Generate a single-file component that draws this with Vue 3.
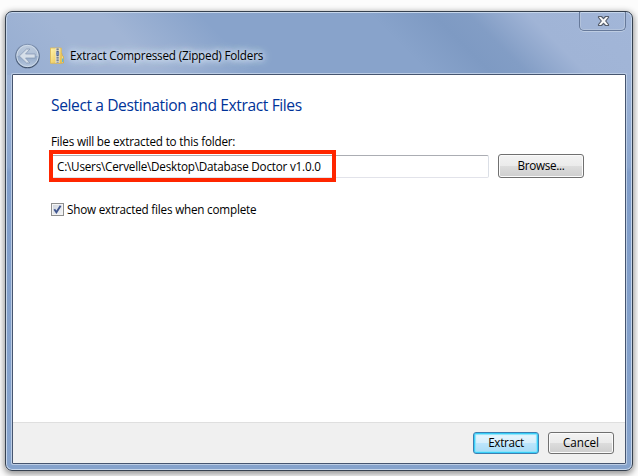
<script setup>
import { ref } from 'vue'

const folder = ref('C:\\Users\\Cervelle\\Desktop\\Database Doctor v1.0.0')
const showFiles = ref(true)
</script>

<template>
  <main class="desktop">
    <section class="window">
      <button class="close" aria-label="Close">
        <svg width="13" height="12" viewBox="0 0 13 12">
          <path d="M1.5 1.5h3l2 2.2 2-2.2h3v1L8.7 6l2.8 3.5v1h-3l-2-2.2-2 2.2h-3v-1L4.3 6 1.5 2.5z" fill="#fafafa" stroke="#555d6b" stroke-width="1.2" stroke-linejoin="round" />
        </svg>
      </button>
      <header class="titlebar">
        <svg class="back" width="25" height="26" viewBox="0 0 26 26">
          <defs>
            <linearGradient id="disc" x1="0" y1="0" x2="0" y2="1">
              <stop offset="0" stop-color="#bdcbdd" />
              <stop offset=".48" stop-color="#afc0d7" />
              <stop offset=".52" stop-color="#93a9c7" />
              <stop offset="1" stop-color="#b9cae1" />
            </linearGradient>
            <linearGradient id="rim" x1="0" y1="0" x2="0" y2="1">
              <stop offset="0" stop-color="#8296b5" />
              <stop offset="1" stop-color="#435570" />
            </linearGradient>
          </defs>
          <circle cx="13" cy="13" r="12.2" fill="url(#disc)" stroke="url(#rim)" stroke-width="1.3" />
          <circle cx="13" cy="13" r="11.1" fill="none" stroke="#d3deeb" stroke-width=".9" />
          <path d="M4.5 13l7.4-7.2h3.6L11 10.9h10v4.2H11l4.5 5.1h-3.6z" fill="#d6dfe9" stroke="#8598b4" stroke-width=".8" stroke-linejoin="round" />
        </svg>
        <svg class="zip" width="15" height="17" viewBox="0 0 15 17">
          <defs>
            <linearGradient id="folder" x1="0" y1="0" x2="1" y2="1">
              <stop offset="0" stop-color="#fff4ad" />
              <stop offset="1" stop-color="#e8bd45" />
            </linearGradient>
          </defs>
          <path d="M9 6l3 .5v2l1.5 1V16H9z" fill="#f3dc86" stroke="#d1a239" stroke-width=".7" />
          <path d="M.5 1h10.8v15.3H.5z" fill="url(#folder)" stroke="#dfb94f" stroke-width=".8" />
          <path d="M5.5 1h4v15h-4z" fill="#e8e5d5" />
          <path d="M7.6 1.5v14" stroke="#52617e" stroke-width="2.3" stroke-dasharray="1.2 1" />
          <path d="M6.2 5h2.9v3H6.2z" fill="#6e83b2" />
          <path d="M12.6 11.5V15" stroke="#52b9df" stroke-width="1.2" />
        </svg>
        <span class="caption">Extract Compressed (Zipped) Folders</span>
      </header>
      <div class="client">
        <div class="body">
          <h1>Select a Destination and Extract Files</h1>
          <label class="label" for="folder">Files will be extracted to this folder:</label>
          <div class="row">
            <div class="field">
              <input id="folder" v-model="folder" type="text" spellcheck="false" />
              <span class="highlight"></span>
            </div>
            <button class="btn browse">Browse...</button>
          </div>
          <label class="option">
            <input v-model="showFiles" type="checkbox" />
            <span class="box">
              <svg v-if="showFiles" width="9" height="9" viewBox="0 0 9 9">
                <path d="M1.3 4.2l2.1 3L7.6 .8" fill="none" stroke="#40568f" stroke-width="1.9" />
              </svg>
            </span>
            <span class="option-text">Show extracted files when complete</span>
          </label>
        </div>
        <footer class="footer">
          <button class="btn primary">Extract</button>
          <button class="btn cancel">Cancel</button>
        </footer>
      </div>
    </section>
  </main>
</template>

<style>
body {
  margin: 0;
  background: #fcfcfc;
}
</style>

<style scoped>
* {
  box-sizing: border-box;
}

.desktop {
  width: 638px;
  height: 476px;
  padding: 11px 5px 5px;
  overflow: hidden;
  background: #fcfcfc;
  font-family: "Open Sans", "Noto Sans", sans-serif;
  font-size: 11.7px;
  color: #000;
}

.window {
  position: relative;
  display: flex;
  flex-direction: column;
  width: 628px;
  height: 460px;
  padding: 0 6px 6px;
  border: 1px solid #36414f;
  border-radius: 7px;
  background:
    linear-gradient(45deg, #96add1 0, #a1b5d5 70px, #a1b5d5 110px, #88a3cb 180px, #88a3cb 300px, #7e9ac3 345px, #829dc5 370px, #a0b4d6 412px, #a2b6d8 100%) 0 0 / 100% 63px no-repeat,
    linear-gradient(180deg, #a0b4d5 0, #9cb2d5 70px, #8ba6ce 155px, #809dc9 160px, #86a3cc 100%);
  box-shadow: inset 0 0 0 1px #c6d6eb, 0 2px 6px 1px rgba(0, 0, 0, 0.42);
}

.close {
  position: absolute;
  top: 0;
  right: 6px;
  display: grid;
  place-items: center;
  width: 47px;
  height: 19px;
  padding: 0 0 0 1px;
  border: 1px solid #66799a;
  border-top: 0;
  border-radius: 0 0 5px 5px;
  background: transparent;
  box-shadow: inset 1px 0 #b3c3dc, inset -1px -1px #b3c3dc, 0 1px #bdcce2;
}

.titlebar {
  display: flex;
  flex: none;
  align-items: center;
  height: 62px;
  padding: 25px 0 0 3px;
}

.zip {
  margin-left: 10px;
}

.caption {
  margin-left: 5px;
  padding-bottom: 1px;
  line-height: 18px;
  letter-spacing: -0.2px;
  white-space: nowrap;
  text-shadow: 0 0 7px #dfe8f5, 0 0 10px #d4e0f0, 0 0 13px #d4e0f0, 0 0 5px #d4e0f0;
}

.client {
  display: flex;
  flex: 1;
  flex-direction: column;
  border: 1px solid #46556f;
  border-radius: 1px;
  background: #fff;
  box-shadow: 0 0 0 1px #bccde5;
}

.body {
  flex: 1;
  padding: 19px 41px 0 38px;
}

h1 {
  margin: 0;
  font-size: 15.6px;
  font-weight: 400;
  line-height: 22px;
  letter-spacing: -0.4px;
  color: #003399;
  white-space: nowrap;
}

.label {
  display: block;
  width: max-content;
  margin-top: 16px;
  line-height: 18px;
  letter-spacing: -0.2px;
}

.row {
  display: flex;
  gap: 9px;
  align-items: center;
  margin-top: 4px;
}

.field {
  position: relative;
  width: 438px;
  height: 24px;
}

.field input {
  display: block;
  width: 100%;
  height: 23px;
  margin-top: 1px;
  padding: 0 5px 2px;
  border: 1px solid #e2e3ea;
  border-top-color: #abadb3;
  border-right-color: #dbdfe6;
  border-radius: 2px;
  outline: 0;
  background: #fff;
  font: inherit;
  letter-spacing: -0.21px;
  color: #000;
}

.highlight {
  position: absolute;
  top: -4px;
  left: -2px;
  width: 287px;
  height: 32px;
  border: 4px solid #ff2600;
  pointer-events: none;
}

.btn {
  display: flex;
  align-items: center;
  justify-content: center;
  height: 22px;
  padding: 0 0 2px;
  border: 1px solid #707070;
  border-radius: 3px;
  background: linear-gradient(#f3f3f3 0, #ebebeb 48%, #dddddd 50%, #cecece 100%);
  box-shadow: inset 0 0 0 1px #fbfbfb;
  font: inherit;
  letter-spacing: -0.3px;
  color: #000;
}

.browse {
  width: 86px;
  height: 24px;
}

.option {
  display: flex;
  align-items: center;
  width: max-content;
  margin-top: 22px;
  line-height: 19px;
}

.option input {
  display: none;
}

.box {
  display: grid;
  place-items: center;
  width: 13px;
  height: 13px;
  border: 1px solid #8e8f8f;
  background: linear-gradient(135deg, #cdd3dc, #f6f7f8);
  box-shadow: inset 0 0 0 1px #f4f4f4;
}

.option-text {
  margin-left: 3px;
  letter-spacing: -0.2px;
}

.footer {
  display: flex;
  flex: none;
  gap: 9px;
  justify-content: flex-end;
  height: 41px;
  padding: 9px 11px 0 0;
  border-top: 1px solid #dfdfdf;
  background: #f0f0f0;
}

.primary,
.cancel {
  width: 66px;
}

.cancel {
  letter-spacing: 0;
}

.primary {
  border-color: #3c7fb1;
  background: linear-gradient(#e9f6fd 0, #d7effc 48%, #bde6fd 50%, #a9dbf5 100%);
  box-shadow: inset 0 0 0 1px #39cff8, inset 0 0 1px 2px #8be3fb;
}
</style>
